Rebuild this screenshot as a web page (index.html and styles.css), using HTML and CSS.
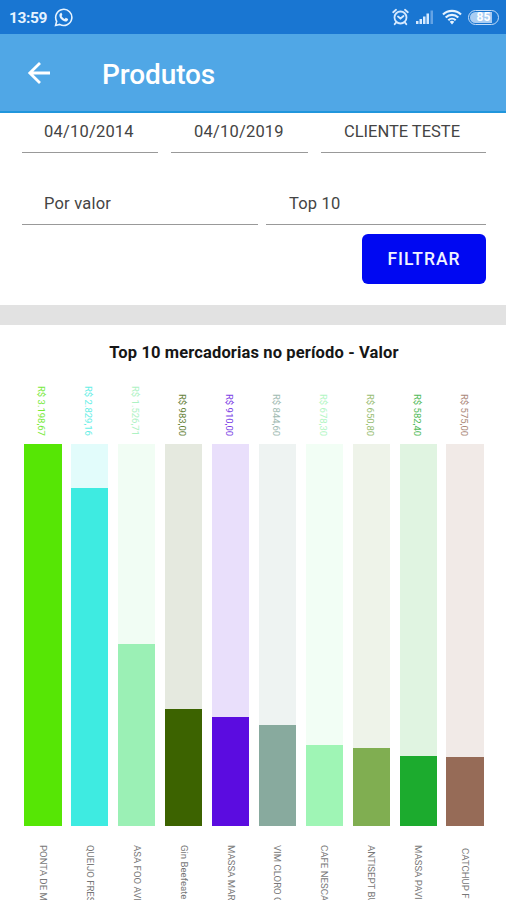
FILE: index.html
```html
<!DOCTYPE html>
<html lang="pt-BR">
<head>
<meta charset="utf-8">
<title>Produtos</title>
<link rel="stylesheet" href="styles.css">
</head>
<body>
<div class="status">
  <span class="clock">13:59</span>
  <svg class="whats" width="19" height="19" viewBox="0 0 24 24"><path fill="none" stroke="#e6f3ff" stroke-width="2" d="M2 22l1.400-5.200A10.200 10.200 0 1 1 7.200 20.700Z"/><path fill="#e6f3ff" d="M8.500 6.300c.5-.3 1-.2 1.200.3l.8 1.900c.1.3 0 .6-.2.800l-.7.900c.9 1.700 2.200 2.900 4 3.700l1-1.200c.2-.3.500-.3.800-.2l2 1c.4.2.5.5.4.900-.3 1.900-2 2.800-3.800 2.500-4-.8-7.200-4.200-7.200-7.700 0-1.200.7-2.300 1.700-2.900Z"/></svg>
  <span class="spacer"></span>
  <svg class="alarm" width="17" height="18" viewBox="0 0 17 18"><g fill="none" stroke="#d5e9ff" stroke-width="1.800" stroke-linecap="round"><circle cx="8.500" cy="9.500" r="6"/><path d="M1.200 4.200 4 1.800M15.800 4.200 13 1.800M4 14.700l-1.300 1.500M13 14.700l1.300 1.500M6 8.500l2.500 2 3-2.500"/></g></svg>
  <svg class="signal" width="20" height="16" viewBox="0 0 20 16"><g fill="#d5e9ff"><path d="M1 12h2.500v3H1zM4.500 10H7v5H4.500zM8 7.500h2.500V15H8zM11.500 4.500H14V15h-2.500z"/><path opacity=".4" d="M15.500 1.500H18V15h-2.500z"/></g></svg>
  <svg class="wifi" width="20" height="16" viewBox="0 0 20 16"><g fill="none" stroke="#e6f3ff" stroke-width="2.200"><path d="M1 5.500a13 13 0 0 1 18 0M3.700 8.500a9 9 0 0 1 12.600 0M6.300 11.200a5.400 5.400 0 0 1 7.400 0"/></g><path fill="#e6f3ff" d="M7.700 12.800a3.300 3.300 0 0 1 4.600 0L10 15.500Z"/></svg>
  <span class="battery"><span class="level">85</span></span>
</div>
<header class="appbar">
  <svg width="24" height="24" viewBox="0 0 24 24"><path fill="none" stroke="#fff" stroke-width="2.800" d="M24 12H4M14 2 3.800 12 14 22"/></svg>
  <h1>Produtos</h1>
</header>
<section class="filters">
  <div class="row dates">
    <div class="field">04/10/2014</div>
    <div class="field">04/10/2019</div>
    <div class="field client">CLIENTE TESTE</div>
  </div>
  <div class="row options">
    <div class="field">Por valor</div>
    <div class="field">Top 10</div>
  </div>
  <button class="filter-btn">FILTRAR</button>
</section>
<section class="report">
  <h2>Top 10 mercadorias no período - Valor</h2>
  <div class="chart" id="chart"></div>
</section>
<script src="chart.js"></script>
</body>
</html>
```
FILE: styles.css
```css
* { box-sizing: border-box; }
body { margin: 0; height: 900px; overflow: hidden; background: #fff; font-family: Roboto, "Liberation Sans", sans-serif; color: #444; }
.status { height: 34px; background: #1976d2; display: flex; align-items: center; padding: 0 7px 0 9px; }
.clock { font-size: 15.500px; font-weight: 700; color: #e6f3ff; width: 45px; letter-spacing: -.4px; padding-top: 2px; }
.spacer { flex: 1; }
.alarm { margin-right: 6px; }
.signal { margin-right: 7px; }
.wifi { margin-right: 6px; }
.battery { width: 31px; height: 15px; border: 1.500px solid #c3dcf8; border-radius: 8px; padding: 1px; display: flex; }
.level { flex: 1; border-radius: 6px; background: linear-gradient(90deg, #a9cdf3 82%, transparent 82%); color: #fff; font-size: 12px; font-weight: 700; line-height: 11px; text-align: center; }
.appbar { height: 79px; background: #50a7e6; border-bottom: 2px solid #2196dc; display: flex; align-items: center; padding-left: 26px; }
.appbar h1 { margin: 5px 0 0 52px; font-size: 28px; line-height: 32px; font-weight: 500; color: #fff; letter-spacing: -.1px; }
.filters { height: 192px; padding: 0 20px 0 22px; display: flex; flex-direction: column; }
.row { display: grid; }
.dates { grid-template-columns: 136px 137px 165px; gap: 13px; }
.options { grid-template-columns: 236px 220px; gap: 8px; margin-top: 31px; }
.field { height: 40px; border-bottom: 1px solid #999; padding: 9px 0 0 22px; font-size: 16.500px; line-height: 20px; letter-spacing: .2px; white-space: nowrap; }
.options .field { height: 41px; padding-top: 10px; }
.dates .field + .field, .options .field + .field { padding-left: 23px; }
.dates .client { letter-spacing: -.02px; }
.filter-btn { align-self: flex-end; margin-top: 9px; width: 124px; height: 50px; border: 0; border-radius: 6px; background: #0008f2; color: #f0f3ff; font: 500 17.500px Roboto, sans-serif; letter-spacing: 1px; }
.report { border-top: 20px solid #e2e2e2; }
.report h2 { margin: 18px 0 0; text-align: center; font-size: 16.500px; line-height: 20px; font-weight: 700; color: #161616; padding-left: 2px; letter-spacing: .13px; }
.chart { display: grid; grid-template-columns: repeat(10, 1fr); gap: 9.400px; padding: 0 22px 0 24px; margin-top: 13px; }
.item { display: flex; flex-direction: column; align-items: center; }
.value, .name { writing-mode: vertical-rl; white-space: nowrap; }
.value { height: 60px; text-align: right; font-size: 9.500px; line-height: 12px; margin-right: 3px; opacity: .8; }
.track { width: 100%; height: 382px; margin-top: 8px; display: flex; align-items: flex-end; }
.bar { width: 100%; }
.name { margin-top: 19px; height: 55px; font-size: 9.600px; line-height: 12px; color: #777; }
.item:last-child .name { margin-top: 22px; height: 52px; }
```
FILE: chart.js
```js
const items = [
  ["R$ 3.198,67", 3198.67, "#56e605", "#e7fbdf", "PONTA DE M"],
  ["R$ 2.829,16", 2829.16, "#3eebe1", "#e2fcfb", "QUEIJO FRES"],
  ["R$ 1.526,71", 1526.71, "#9bf0b5", "#f1fdf4", "ASA FOO AVE"],
  ["R$ 983,00", 983, "#3c6300", "#e5e9df", "Gin Beefeater"],
  ["R$ 910,00", 910, "#5b0ce0", "#e9dffb", "MASSA MAR"],
  ["R$ 844,60", 844.6, "#88aa9e", "#eef3f2", "VIM CLORO G"],
  ["R$ 678,30", 678.3, "#9ff5b5", "#f2fef5", "CAFE NESCA"],
  ["R$ 650,80", 650.8, "#80ae51", "#eef3e9", "ANTISEPT BU"],
  ["R$ 582,40", 582.4, "#1cab2e", "#e0f4e1", "MASSA PAVI"],
  ["R$ 575,00", 575, "#966b57", "#f1eae7", "CATCHUP F"]
];
document.getElementById("chart").innerHTML = items.map(([label, v, color, tint, name]) => `
  <div class="item">
    <span class="value" style="color:${color}">${label}</span>
    <div class="track" style="background:${tint}"><div class="bar" style="background:${color};height:${v / 3198.67 * 100}%"></div></div>
    <span class="name">${name}</span>
  </div>`).join("");
```
